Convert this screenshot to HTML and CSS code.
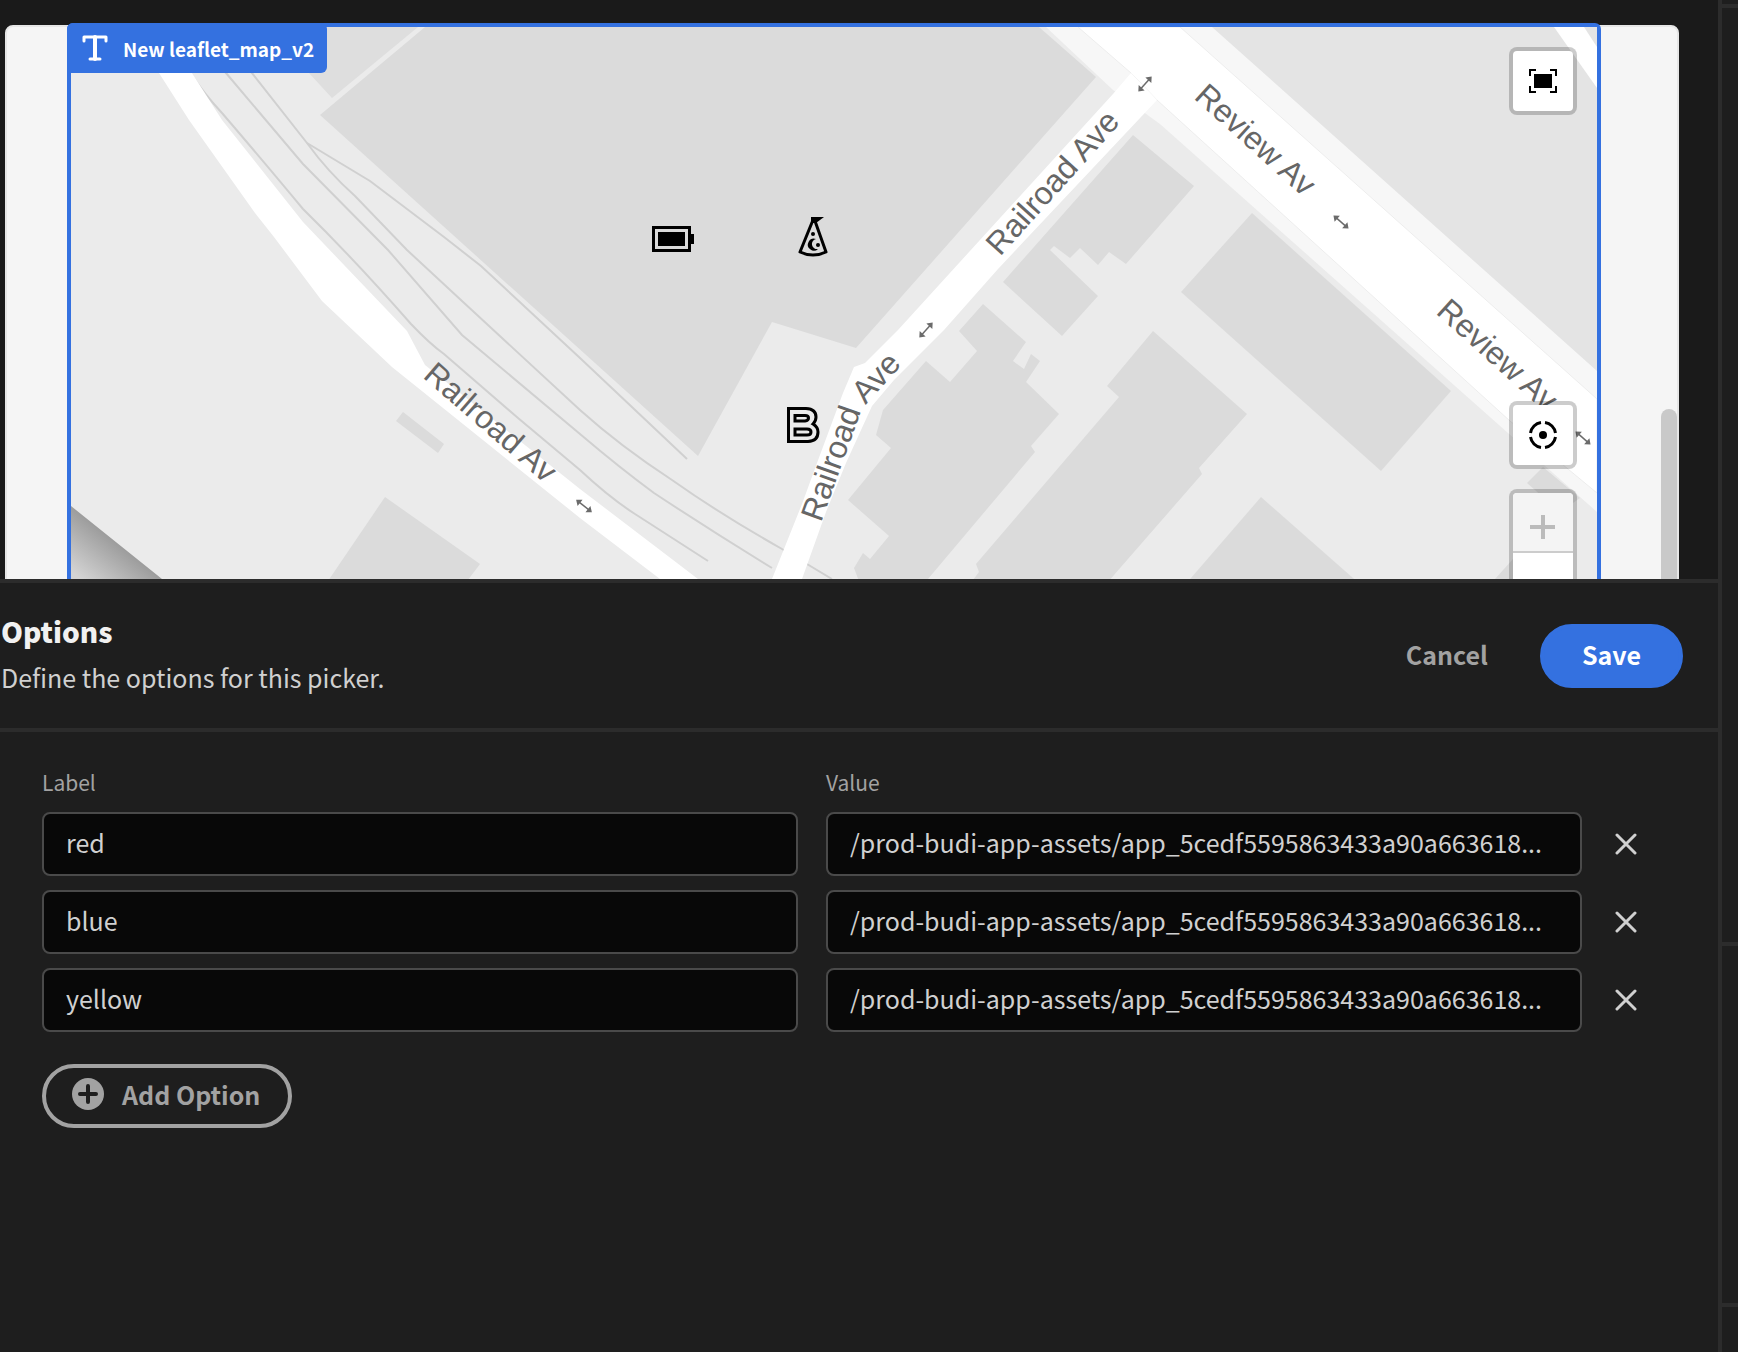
FILE: index.html
```html
<!DOCTYPE html>
<html lang="en">
<head>
<meta charset="utf-8">
<meta name="viewport" content="width=device-width, initial-scale=1">
<title>Options</title>
<link rel="stylesheet" href="styles.css">
</head>
<body>
<div class="app">
  <div class="main">
    <section class="workspace" aria-label="Preview">
      <div class="canvas">
        <div class="component">
          <svg class="map" viewBox="71 27 1526 610" preserveAspectRatio="xMinYMin slice" role="img" aria-label="Street map">
            <defs>
              <linearGradient id="edge" gradientUnits="userSpaceOnUse" x1="120" y1="545" x2="88" y2="585">
                <stop offset="0" stop-color="#9c9c9c"/><stop offset="1" stop-color="#d4d4d4"/>
              </linearGradient>
              <g id="arrow">
                <path d="M-7 0H7" stroke="#6b6b6b" stroke-width="1.500"/>
                <path d="M-10 0l5-4v8zM10 0l-5-4v8z" fill="#6b6b6b"/>
              </g>
              <path id="ave-curve" d="M821 523L858 420Q862 408 870 400L922 343"/>
            </defs>
            <rect x="71" y="27" width="1526" height="610" fill="#ebebeb"/>
            <path d="M71 506L162 579L235 637H71z" fill="url(#edge)"/>
            <g fill="#dbdbdb">
              <path d="M268 27L309 73L332 98L418 27z" fill="#dedede"/>
              <path d="M320 115L425 27H1039L1096 77L856 348L772 322L698 456z"/>
              <path d="M403 412L444 444L438 453L396 421z"/>
              <path d="M385 497L480 564L425 637H290z"/>
              <path d="M1133 135L1194 186L1126 264L1109 252L1098 265L1080 248L1070 258L1054 246L1050 250L1098 296L1062 336L1003 282z"/>
              <path d="M983 304L1026 342L1013 361L1024 369L1031 354L1040 361L1026 382L1059 414L1031 446L1035 452L928 579L880 637L854 568L863 553L870 559L889 536L848 500L891 448L876 435L883 410L926 361L950 382L977 351L959 331z"/>
              <path d="M1153 331L1247 414L1199 468L1202 474L1060 637H930L979 572L976 564L1119 397L1107 386z"/>
              <path d="M1252 213L1451 391L1381 471L1181 292z"/>
              <path d="M1261 497L1420 637H1140z"/>
              <path d="M1543 467L1580 498L1560 512L1527 483z"/>
              <path d="M1495 579L1530 540L1597 600V637H1450z"/>
            </g>
            <path d="M1200 27H1597V385z" fill="#e4e4e4"/>
            <path d="M1554 27H1584L1597 47V88z" fill="#fff"/>
            <g class="rails">
              <path d="M165 27Q185 73 222 113Q259 156 303 209Q355 260 411 324Q430 344 444 354L518 418L580 470Q610 498 635 514L708 561"/>
              <path d="M190 27L226 73L303 164L388 250L462 335L580 434Q620 468 654 493Q710 530 772 568"/>
              <path d="M215 27L252 73L307 143Q328 172 355 196L407 250L462 301L580 410Q620 446 672 480Q720 514 782 549L832 579"/>
              <path d="M307 143L370 181L444 237L481 266L580 358L687 459"/>
            </g>
            <path d="M1046 27H1212L1597 371V512L1160 124L1113 90z" fill="#f7f7f7"/>
            <path d="M1078 27H1180L1597 399V493L1510 421L1157 100L1131 73z" fill="#fff" stroke="#ededed" stroke-width="1"/>
            <path d="M135 27H165L192 73L222 120L303 222L407 331L425 365L580 489L698 579L770 637H730L660 579L580 518L392 367L322 301L274 237L255 213L189 120L159 73z" fill="#fff"/>
            <path d="M748 637L772 579L802 504L817 463L843 393L854 367L865 363L898 330L1113 94L1131 73L1157 100L998 269L944 330L894 380L872 406L846 463L826 512L802 579L780 637z" fill="#fff"/>
            <g class="street">
              <text transform="translate(422 377) rotate(41)">Railroad Av</text>
              <text transform="translate(1000 257) rotate(-48)">Railroad Ave</text>
              <text><textPath href="#ave-curve">Railroad Ave</textPath></text>
              <text transform="translate(1193 98) rotate(42)">Review Av</text>
              <text transform="translate(1435 313) rotate(42)">Review Av</text>
            </g>
            <use href="#arrow" transform="translate(584 506) rotate(38)"/>
            <use href="#arrow" transform="translate(926 330) rotate(-48)"/>
            <use href="#arrow" transform="translate(1145 84) rotate(-48)"/>
            <use href="#arrow" transform="translate(1341 222) rotate(41)"/>
            <use href="#arrow" transform="translate(1583 438) rotate(41)"/>
            <g>
              <path d="M653.500 227.500H689.500V250.500H653.500z" fill="none" stroke="#000" stroke-width="3"/>
              <path d="M658 232H685V246H658zM691 234H694V244H691z"/>
            </g>
            <g>
              <path d="M813 220L800 252Q813 258 826 252L815 221" fill="none" stroke="#000" stroke-width="3" stroke-linejoin="round"/>
              <path d="M811 217H824L816 223H811z"/>
              <path d="M816 239A6 6 0 1 0 818 249A5 5 0 0 1 816 239z"/>
              <circle cx="813" cy="234" r="2"/><circle cx="818" cy="245" r="2"/>
            </g>
            <g fill="none" stroke="#000" stroke-width="3">
              <path d="M788.500 408.500H806Q816 409 816 417Q816 421 813 424Q818 427 818 432Q818 441 808 441.500H788.500z"/>
              <path d="M795 415.500H805Q808.500 415.500 808.500 418T805 421H795zM795 429H807Q811 429 811 432T807 435H795z"/>
            </g>
          </svg>
          <div class="tag">
            <svg width="26" height="26" viewBox="0 0 26 26" fill="none" stroke="#fff" stroke-width="3" stroke-linejoin="round" stroke-linecap="round"><path d="M2 6V2H24V6M8 24H18"/><path d="M13 2V24" stroke-width="4"/></svg>
            <span>New leaflet_map_v2</span>
          </div>
          <div class="controls controls-top">
            <button class="control" aria-label="Full screen">
              <svg width="28" height="24" viewBox="0 0 28 24"><path d="M5 5H23V19H5z"/><path d="M1 7V1H7M21 1H27V7M27 17V23H21M7 23H1V17" fill="none" stroke="#000" stroke-width="2"/></svg>
            </button>
          </div>
          <div class="controls controls-bottom">
            <button class="control" aria-label="Locate me">
              <svg width="30" height="30" viewBox="0 0 30 30"><circle cx="15" cy="15" r="4"/><path d="M2.500 13A12.500 12.500 0 0 1 13 2.500M17 2.500A12.500 12.500 0 0 1 27.500 13M27.500 17A12.500 12.500 0 0 1 17 27.500M13 27.500A12.500 12.500 0 0 1 2.500 17" fill="none" stroke="#000" stroke-width="3"/></svg>
            </button>
            <div class="zoom">
              <button class="zoom-button zoom-in" aria-label="Zoom in" disabled>
                <svg width="26" height="26" viewBox="0 0 26 26"><path d="M0 13H25M13 1V25" stroke="#bbb" stroke-width="4"/></svg>
              </button>
              <button class="zoom-button" aria-label="Zoom out">
                <svg width="26" height="26" viewBox="0 0 26 26"><path d="M0 13H25" stroke="#000" stroke-width="4"/></svg>
              </button>
            </div>
          </div>
        </div>
        <div class="scrollbar"></div>
      </div>
    </section>

    <section class="drawer" aria-labelledby="drawer-title">
      <header class="drawer-header">
        <div class="drawer-text">
          <h1 id="drawer-title">Options</h1>
          <p>Define the options for this picker.</p>
        </div>
        <div class="drawer-buttons">
          <button class="button button-quiet">Cancel</button>
          <button class="button button-primary">Save</button>
        </div>
      </header>
      <form class="drawer-body">
        <div class="options">
          <span class="heading" id="col-label">Label</span>
          <span class="heading" id="col-value">Value</span>
          <span></span>

          <input class="field" type="text" aria-labelledby="col-label" value="red">
          <input class="field" type="text" aria-labelledby="col-value" value="/prod-budi-app-assets/app_5cedf5595863433a90a663618...">
          <button class="remove" type="button" aria-label="Remove red"><svg width="22" height="22" viewBox="0 0 22 22"><path d="M2 2L20 20M20 2L2 20"/></svg></button>

          <input class="field" type="text" aria-labelledby="col-label" value="blue">
          <input class="field" type="text" aria-labelledby="col-value" value="/prod-budi-app-assets/app_5cedf5595863433a90a663618...">
          <button class="remove" type="button" aria-label="Remove blue"><svg width="22" height="22" viewBox="0 0 22 22"><path d="M2 2L20 20M20 2L2 20"/></svg></button>

          <input class="field" type="text" aria-labelledby="col-label" value="yellow">
          <input class="field" type="text" aria-labelledby="col-value" value="/prod-budi-app-assets/app_5cedf5595863433a90a663618...">
          <button class="remove" type="button" aria-label="Remove yellow"><svg width="22" height="22" viewBox="0 0 22 22"><path d="M2 2L20 20M20 2L2 20"/></svg></button>
        </div>
        <button class="button button-outline" type="button">
          <svg width="32" height="32" viewBox="0 0 32 32"><circle cx="16" cy="16" r="16" fill="#a2a2a2"/><path d="M8 16H24M16 8V24" stroke="#1e1e1e" stroke-width="4" stroke-linecap="round"/></svg>
          <span>Add Option</span>
        </button>
      </form>
    </section>
  </div>
  <aside class="settings" aria-label="Settings">
    <div class="settings-section"></div>
    <div class="settings-section settings-large"></div>
    <div class="settings-section settings-medium"></div>
    <div></div>
  </aside>
</div>
</body>
</html>
```
FILE: styles.css
```css
:root {
  --line: #2c2c2c;
  --panel: #1e1e1e;
  --blue: #3471e0;
  --muted: #a2a2a2;
  --text: #d0d0d0;
}

* {
  box-sizing: border-box;
}

body {
  margin: 0;
  background: var(--panel);
  color: var(--text);
  font-family: "Noto Sans CJK KR", "Noto Sans", sans-serif;
  font-size: 25px;
}

button,
input {
  font: inherit;
  margin: 0;
}

svg {
  display: block;
  flex: none;
}

.app {
  display: flex;
  height: 100vh;
}

.main {
  flex: 1;
  min-width: 0;
  display: grid;
  grid-template-rows: minmax(0, 3fr) minmax(0, 4fr);
}

.workspace {
  overflow: hidden;
  padding: 25px 39px 0 5px;
  background: #1a1a1a;
}

.canvas {
  position: relative;
  padding: 0 76px 80px 60px;
  background: #f5f5f5;
  border: 2px solid #e6e6e6;
  border-radius: 8px;
}

.component {
  position: relative;
  margin-top: -4px;
  border: 4px solid var(--blue);
  border-radius: 6px;
}

.map {
  width: 100%;
  height: 610px;
}

.street text {
  font-family: "Liberation Sans", Arial, sans-serif;
  font-size: 32px;
  fill: #666;
}

.rails {
  fill: none;
  stroke: #d0d0d0;
  stroke-width: 2;
}

.tag {
  position: absolute;
  top: -4px;
  left: -4px;
  display: flex;
  align-items: center;
  gap: 15px;
  height: 50px;
  padding: 0 13px 0 15px;
  border-radius: 6px 6px 6px 0;
  background: var(--blue);
  color: #fff;
  font-size: 19px;
  font-weight: 700;
  white-space: nowrap;
}

.controls {
  position: absolute;
  right: 20px;
  display: flex;
  flex-direction: column;
  gap: 20px;
}

.controls-top {
  top: 20px;
}

.controls-bottom {
  bottom: 20px;
}

.control,
.zoom {
  width: 68px;
  border: 4px solid rgba(0, 0, 0, 0.2);
  border-radius: 8px;
  background: #fff;
  background-clip: padding-box;
}

.control {
  display: grid;
  place-items: center;
  height: 68px;
  padding: 0;
}

.zoom {
  overflow: hidden;
}

.zoom-button {
  display: grid;
  place-items: center;
  width: 100%;
  height: 60px;
  padding: 10px 0 0;
  border: 0;
  background: #fff;
}

.zoom-in {
  background: #f4f4f4;
  border-bottom: 2px solid #ccc;
}

.scrollbar {
  position: absolute;
  top: 382px;
  right: 0;
  bottom: 0;
  width: 16px;
  border-radius: 8px;
  background: #c9c9c9;
}

.drawer {
  border-top: 4px solid var(--line);
  background: var(--panel);
}

.drawer-header {
  display: flex;
  align-items: center;
  justify-content: space-between;
  padding: 28px 35px 28px 0;
  border-bottom: 4px solid var(--line);
}

.drawer-text {
  display: flex;
  flex-direction: column;
  gap: 6px;
  padding: 0 0 2px 1px;
}

.drawer-text h1 {
  margin: 0;
  color: #f1f1f1;
  font-size: 28px;
  font-weight: 900;
  line-height: 40px;
}

.drawer-text p {
  margin: 0;
  line-height: 41px;
}

.drawer-buttons {
  display: flex;
  gap: 10px;
}

.button {
  display: flex;
  align-items: center;
  gap: 18px;
  height: 64px;
  padding-bottom: 5px;
  border: 4px solid transparent;
  border-radius: 32px;
  background: none;
  color: var(--muted);
  font-weight: 700;
}

.button-quiet,
.button-primary {
  padding-left: 38px;
  padding-right: 38px;
}

.button-primary {
  border-color: var(--blue);
  background: var(--blue);
  color: #fff;
}

.button-outline {
  padding-left: 26px;
  padding-right: 28px;
  border-color: var(--muted);
}

.drawer-body {
  display: flex;
  flex-direction: column;
  align-items: flex-start;
  gap: 32px;
  padding: 34px 42px;
}

.options {
  display: grid;
  grid-template-columns: 1fr 1fr 66px;
  gap: 14px 28px;
  width: 100%;
}

.heading {
  color: var(--muted);
  font-size: 21px;
  line-height: 32px;
}

.field {
  min-width: 0;
  width: 100%;
  height: 64px;
  padding: 0 22px 5px;
  border: 2px solid #4a4a4a;
  border-radius: 8px;
  background: #080808;
  color: var(--text);
  text-overflow: ellipsis;
}

.remove {
  align-self: center;
  display: grid;
  place-items: center;
  width: 32px;
  height: 32px;
  padding: 0;
  border: 0;
  background: none;
}

.remove path {
  fill: none;
  stroke: var(--text);
  stroke-width: 3;
  stroke-linecap: round;
}

.settings {
  width: 20px;
  display: flex;
  flex-direction: column;
  border-left: 4px solid var(--line);
  background: var(--panel);
}

.settings-section {
  height: 8px;
  border-bottom: 4px solid var(--line);
}

.settings-large {
  height: 938px;
}

.settings-medium {
  height: 361px;
}
```
